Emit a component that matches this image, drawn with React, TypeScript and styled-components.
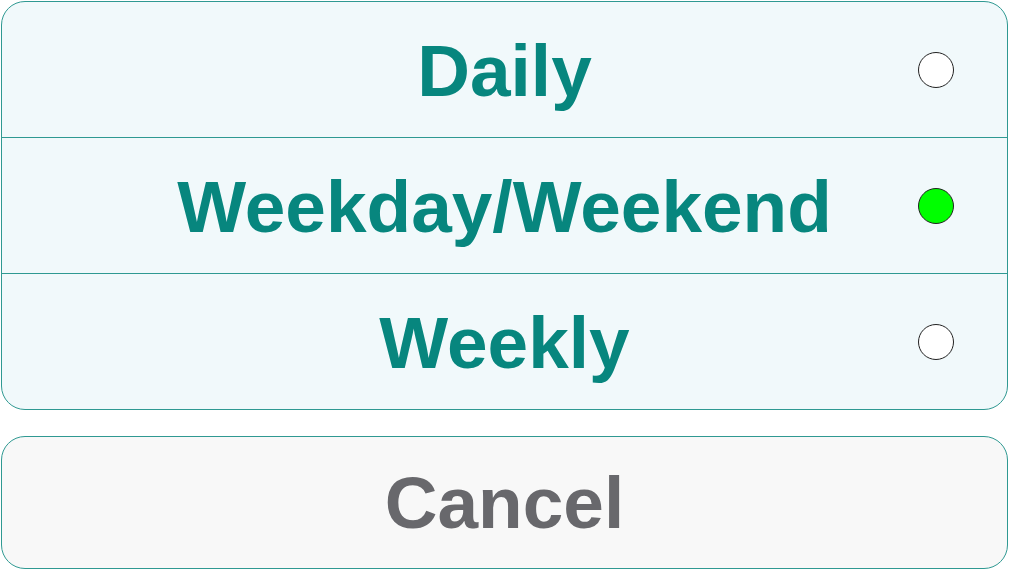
import styled, { createGlobalStyle } from 'styled-components'

const GlobalStyle = createGlobalStyle`
    html, body {
        margin: 0;
        padding: 0;
        background: #ffffff;
    }
    body {
        font-family: 'Liberation Sans', Arial, sans-serif;
    }
`

const options = [
    { label: 'Daily', selected: false },
    { label: 'Weekday/Weekend', selected: true },
    { label: 'Weekly', selected: false },
]

function App() {
    return (
        <>
            <GlobalStyle />
            <Sheet>
                <OptionList>
                    {options.map(option => (
                        <OptionRow key={option.label}>
                            <OptionLabel>{option.label}</OptionLabel>
                            <Radio $selected={option.selected} />
                        </OptionRow>
                    ))}
                </OptionList>
                <CancelButton>Cancel</CancelButton>
            </Sheet>
        </>
    )
}

export default App

const Sheet = styled.div`
    display: flex;
    flex-direction: column;
    gap: 26px;
    width: 1007px;
    padding: 1px 0 0 1px;
`

const OptionList = styled.div`
    display: flex;
    flex-direction: column;
    border: 1px solid #2f9992;
    border-radius: 24px;
    background-color: #f1f9fb;
    overflow: hidden;
`

const OptionRow = styled.div`
    display: grid;
    grid-template-columns: 1fr auto 1fr;
    align-items: center;
    height: 135px;
    & + & {
        border-top: 1px solid #2f9992;
    }
`

const OptionLabel = styled.div`
    grid-column: 2;
    font-size: 73px;
    font-weight: 700;
    color: #07867e;
    line-height: 1;
    padding-top: 2px;
`

const Radio = styled.span<{ $selected: boolean }>`
    grid-column: 3;
    justify-self: end;
    width: 34px;
    height: 34px;
    margin-right: 53px;
    border: 1px solid #222222;
    border-radius: 50%;
    background-color: ${p => (p.$selected ? '#00ff00' : '#ffffff')};
`

const CancelButton = styled.div`
    display: flex;
    justify-content: center;
    align-items: center;
    height: 131px;
    border: 1px solid #2f9992;
    border-radius: 24px;
    background-color: #f8f8f8;
    font-size: 73px;
    font-weight: 700;
    color: #68686c;
`
